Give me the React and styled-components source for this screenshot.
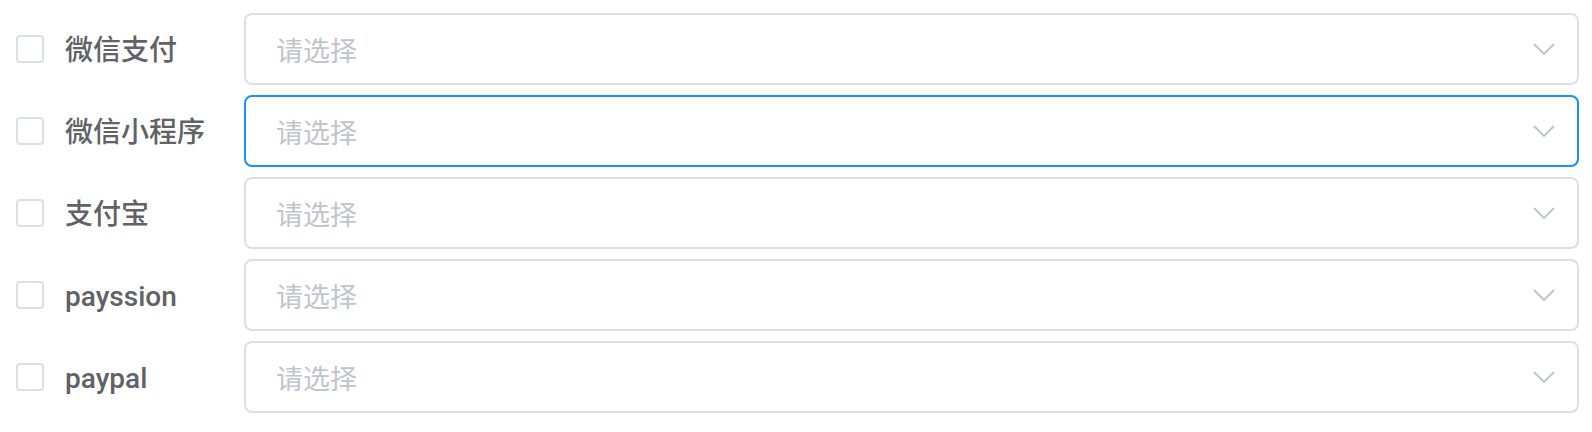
import styled, { createGlobalStyle } from 'styled-components'

const GlobalStyle = createGlobalStyle`
  body {
    margin: 0;
    background: #fff;
    font-family: Roboto, "Noto Sans CJK SC", sans-serif;
  }
`

const List = styled.div`
  display: flex;
  flex-direction: column;
  gap: 10px;
  padding: 13px 13px 0 16px;
`

const Row = styled.div`
  display: flex;
  align-items: center;
  height: 72px;
`

const Check = styled.label`
  display: flex;
  align-items: center;
  width: 228px;
  flex-shrink: 0;
  cursor: pointer;
`

const Box = styled.span`
  width: 28px;
  height: 28px;
  box-sizing: border-box;
  border: 2px solid #dcdfe6;
  border-radius: 4px;
  background: #fff;
`

const Label = styled.span`
  padding-left: 21px;
  padding-top: 3px;
  font-size: 28px;
  font-weight: 500;
  color: #606266;
  line-height: 1;
`

const Select = styled.div`
  flex: 1;
  height: 72px;
  box-sizing: border-box;
  display: flex;
  align-items: center;
  justify-content: space-between;
  padding: 0 22px 0 30px;
  border: 2px solid ${(p) => (p.focused ? '#1890ff' : '#dcdfe6')};
  border-radius: 8px;
  background: #fff;
`

const Placeholder = styled.span`
  font-size: 27px;
  color: #c0c4cc;
  font-family: "Noto Sans CJK SC", sans-serif;
`

const Arrow = () => (
  <svg width="22" height="12" viewBox="0 0 22 12">
    <path d="M1 1 L11 11 L21 1" fill="none" stroke="#c0c4cc" strokeWidth="2" />
  </svg>
)

const methods = [
  { name: '微信支付' },
  { name: '微信小程序', focused: true },
  { name: '支付宝' },
  { name: 'payssion' },
  { name: 'paypal' },
]

const App = () => (
  <>
    <GlobalStyle />
    <List>
      {methods.map((m) => (
        <Row key={m.name}>
          <Check>
            <Box />
            <Label>{m.name}</Label>
          </Check>
          <Select focused={m.focused}>
            <Placeholder>请选择</Placeholder>
            <Arrow />
          </Select>
        </Row>
      ))}
    </List>
  </>
)

export default App
